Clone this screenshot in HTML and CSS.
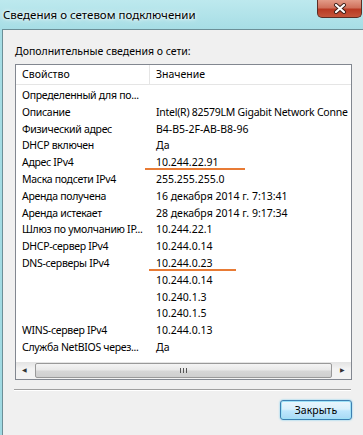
FILE: index.html
```html
<!DOCTYPE html>
<html lang="ru">
<head>
    <meta charset="UTF-8">
    <title>Сведения о сетевом подключении</title>
    <link rel="stylesheet" href="styles.css">
</head>
<body>
    <div class="window">
        <div class="titlebar">
            <span class="title">Сведения о сетевом подключении</span>
            <div class="close-btn">
                <svg width="14" height="11" viewBox="0 0 14 11">
                    <path d="M3 2 L11 9 M11 2 L3 9" stroke="#3b1e18" stroke-width="4" stroke-linecap="round"/>
                    <path d="M3 2 L11 9 M11 2 L3 9" stroke="#fff" stroke-width="2.2" stroke-linecap="round"/>
                </svg>
            </div>
        </div>
        <div class="client">
            <div class="caption">Дополнительные сведения о сети:</div>
            <div class="listview">
                <div class="lv-header">
                    <div class="col-prop">Свойство</div>
                    <div class="col-val">Значение</div>
                </div>
                <div class="lv-body">
                    <div class="row"><div class="col-prop">Определенный для по...</div><div class="col-val"></div></div>
                    <div class="row"><div class="col-prop">Описание</div><div class="col-val tight">Intel(R) 82579LM Gigabit Network Conne</div></div>
                    <div class="row"><div class="col-prop">Физический адрес</div><div class="col-val">B4-B5-2F-AB-B8-96</div></div>
                    <div class="row"><div class="col-prop">DHCP включен</div><div class="col-val">Да</div></div>
                    <div class="row"><div class="col-prop">Адрес IPv4</div><div class="col-val mark mark-ip">10.244.22.91</div></div>
                    <div class="row"><div class="col-prop">Маска подсети IPv4</div><div class="col-val">255.255.255.0</div></div>
                    <div class="row"><div class="col-prop">Аренда получена</div><div class="col-val">16 декабря 2014 г. 7:13:41</div></div>
                    <div class="row"><div class="col-prop">Аренда истекает</div><div class="col-val">28 декабря 2014 г. 9:17:34</div></div>
                    <div class="row"><div class="col-prop">Шлюз по умолчанию IP...</div><div class="col-val">10.244.22.1</div></div>
                    <div class="row"><div class="col-prop">DHCP-сервер IPv4</div><div class="col-val">10.244.0.14</div></div>
                    <div class="row"><div class="col-prop">DNS-серверы IPv4</div><div class="col-val mark mark-dns">10.244.0.23</div></div>
                    <div class="row"><div class="col-prop"></div><div class="col-val">10.244.0.14</div></div>
                    <div class="row"><div class="col-prop"></div><div class="col-val">10.240.1.3</div></div>
                    <div class="row"><div class="col-prop"></div><div class="col-val">10.240.1.5</div></div>
                    <div class="row"><div class="col-prop">WINS-сервер IPv4</div><div class="col-val">10.244.0.13</div></div>
                    <div class="row"><div class="col-prop">Служба NetBIOS через...</div><div class="col-val">Да</div></div>
                </div>
                <div class="hscroll">
                    <div class="arrow">&#9664;</div>
                    <div class="track">
                        <div class="thumb"><span class="grip"></span></div>
                    </div>
                    <div class="arrow">&#9654;</div>
                </div>
            </div>
            <div class="separator"></div>
            <div class="buttons">
                <button class="btn">Закрыть</button>
            </div>
        </div>
    </div>
</body>
</html>
```

FILE: styles.css
```css
body {
    margin: 0;
    width: 363px;
    height: 435px;
    overflow: hidden;
    font-family: 'Noto Sans', 'Open Sans', sans-serif;
    font-size: 10.5px;
    color: #000;
    background: #a9dfe7;
}
.window {
    height: 100%;
    display: flex;
    flex-direction: column;
    background: linear-gradient(180deg, #bde9ee 0%, #a6dde5 30px, #9fd9e2 100%);
}
.titlebar {
    height: 29px;
    display: flex;
    align-items: flex-start;
    justify-content: space-between;
    flex-shrink: 0;
}
.title {
    font-size: 11.5px;
    padding: 7px 0 0 3px;
    text-shadow: 0 0 6px #fff, 0 0 3px #fff;
}
.close-btn {
    width: 45px;
    height: 18px;
    margin-right: 1px;
    box-sizing: border-box;
    border: 1px solid #5a2d24;
    border-top: none;
    border-radius: 0 0 5px 5px;
    background: linear-gradient(180deg, #e39b88 0%, #d0715c 45%, #b93a23 55%, #c4553b 100%);
    display: flex;
    align-items: center;
    justify-content: center;
}
.client {
    flex: 1;
    margin-left: 2px;
    border-left: 1px solid #6c8f97;
    border-top: 1px solid #6c8f97;
    background: #f0f0f0;
    padding: 14px 0 0 12px;
}
.caption {
    height: 20px;
}
.listview {
    width: 337px;
    box-sizing: border-box;
    border: 1px solid #828790;
    background: #fff;
}
.lv-header {
    display: flex;
    height: 19px;
    border-bottom: 1px solid #e5e5e5;
    line-height: 18px;
}
.lv-header .col-prop {
    border-right: 1px solid #e5e5e5;
}
.lv-body {
    padding-top: 2px;
    height: 275px;
}
.row {
    display: flex;
    height: 16.8px;
    line-height: 17px;
}
.col-prop {
    width: 134px;
    box-sizing: border-box;
    padding-left: 6px;
    white-space: nowrap;
    letter-spacing: -0.3px;
    flex-shrink: 0;
}
.lv-header .col-prop {
    letter-spacing: 0;
}
.col-val {
    flex: 1;
    padding-left: 6px;
    white-space: nowrap;
    overflow: hidden;
}
.col-val.tight {
    letter-spacing: -0.25px;
}
.mark {
    position: relative;
    overflow: visible;
}
.mark::after {
    content: '';
    position: absolute;
    height: 2px;
    background: #e87b35;
    top: 14px;
}
.mark-ip::after {
    left: -5px;
    width: 100px;
}
.mark-dns::after {
    left: -1px;
    width: 87px;
}
.hscroll {
    display: flex;
    height: 17px;
    background: linear-gradient(180deg, #e3e3e3, #f3f3f3 40%, #f3f3f3);
}
.arrow {
    width: 17px;
    font-size: 6px;
    line-height: 17px;
    text-align: center;
    color: #333;
}
.track {
    flex: 1;
    padding: 0 2px;
}
.thumb {
    height: 15px;
    margin-top: 1px;
    box-sizing: border-box;
    border: 1px solid #999;
    border-radius: 2px;
    background: linear-gradient(180deg, #f4f4f4 0%, #e9e9e9 45%, #d6d6d6 55%, #cfcfcf 100%);
    display: flex;
    align-items: center;
    justify-content: center;
}
.grip {
    width: 7px;
    height: 5px;
    background: repeating-linear-gradient(90deg, #555 0 1px, transparent 1px 3px);
}
.separator {
    width: 337px;
    margin: 9px 0 0 -1px;
    border-top: 1px solid #a0a0a0;
    border-bottom: 1px solid #fff;
}
.buttons {
    width: 337px;
    display: flex;
    justify-content: flex-end;
    padding-top: 9px;
}
.btn {
    width: 72px;
    height: 20px;
    padding: 0;
    font-family: inherit;
    font-size: 10.5px;
    color: #000;
    border: 1px solid #3c7fb1;
    border-radius: 3px;
    background: linear-gradient(180deg, #eaf6fd 0%, #d9f0fc 45%, #bee6fd 55%, #a7d9f5 100%);
    box-shadow: inset 0 0 0 1px #9ee1f7, 0 0 2px #61c6f0;
}
```
